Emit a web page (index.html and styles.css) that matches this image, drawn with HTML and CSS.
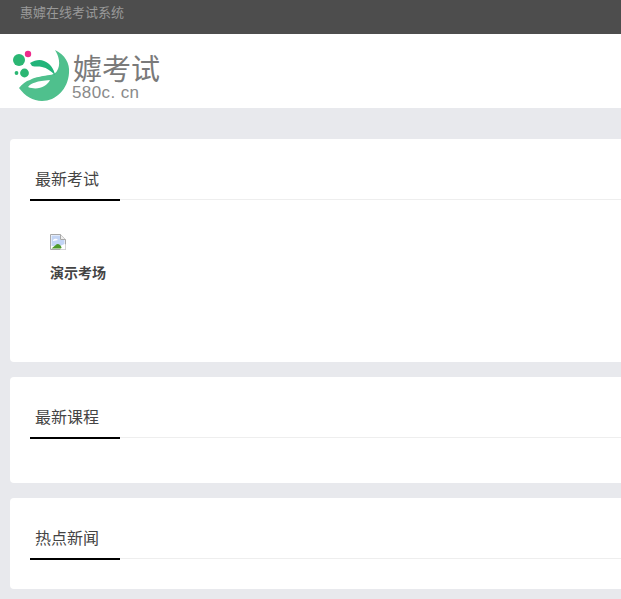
FILE: index.html
```html
<!DOCTYPE html>
<html lang="zh-CN">
<head>
<meta charset="utf-8">
<title>在线考试系统</title>
<link rel="stylesheet" href="styles.css">
</head>
<body>
<header class="topbar"><span class="topbar-text">惠嫭在线考试系统</span></header>
<div class="brand">
  <a class="logo" href="#">
    <svg class="logo-mark" width="60" height="56" viewBox="0 0 60 56" aria-hidden="true">
      <path class="crescent" d="M42 1 C52 6 57 14 56 24 C55 40 43 52 29 52 C20 52 12 47 6 39 C9 35 13 32 17 31 C22 28 26 28 30 27 C36 26 42 26 44 22 C48 16 46 7 42 1 Z"/>
      <path class="slit" d="M15 38 C18 34 24 32 37 31 C34 37 25 42 15 38 Z"/>
      <path class="leaf" d="M17 14 C22 11 27 10 31 12 C37 14 41 20 42 26 C38 22 34 19 29 18 C26 17 22 18 19 17 Z"/>
      <circle class="dot-pink" cx="15" cy="5" r="3.2"/>
      <circle class="dot" cx="6" cy="11" r="6"/>
      <circle class="dot" cx="11.5" cy="24" r="4.4"/>
      <circle class="dot" cx="3.5" cy="24" r="1.9"/>
    </svg>
    <span class="logo-words">
      <span class="logo-name">嫭考试</span>
      <span class="logo-domain">580c. cn</span>
    </span>
  </a>
</div>
<main class="main">
  <section class="card">
    <div class="card-head"><h2 class="card-title">最新考试</h2></div>
    <div class="card-body exams">
      <a class="exam" href="#">
        <svg class="broken" width="16" height="16" viewBox="0 0 16 16" aria-hidden="true">
          <path d="M0.5 0.5H10.5L15.5 5.5V15.5H0.5Z" fill="#fff" stroke="#a9a9a9"/>
          <path d="M10.5 0.5V5.5H15.5" fill="#eee" stroke="#a9a9a9"/>
          <path d="M1.5 1.5H10V6H14.5V10L10 12H1.5Z" fill="#c3d5f5"/>
          <path d="M3 6C5 4 7 5 8 6L3 7Z" fill="#fff"/>
          <path d="M1.5 14.5L7 10C10 10 11 12 12 14.5Z" fill="#4d9a2a"/>
          <path d="M10 15.5L15.5 10V15.5Z" fill="#fff"/>
        </svg>
        <span class="exam-name">演示考场</span>
      </a>
    </div>
  </section>
  <section class="card">
    <div class="card-head"><h2 class="card-title">最新课程</h2></div>
    <div class="card-body courses"></div>
  </section>
  <section class="card">
    <div class="card-head"><h2 class="card-title">热点新闻</h2></div>
  </section>
</main>
</body>
</html>
```
FILE: styles.css
```css
* { box-sizing: border-box; }
html, body { margin: 0; padding: 0; }
body {
  background: #e8e9ed;
  font-family: "Noto Sans CJK SC", "Liberation Sans", sans-serif;
  color: #333;
  overflow-x: hidden;
}
a { color: inherit; text-decoration: none; }
.topbar {
  height: 34px;
  background: #4d4d4d;
  padding-left: 20px;
}
.topbar-text {
  display: block;
  font-size: 13px;
  line-height: 24px;
  color: #999;
}
.brand {
  height: 74px;
  background: #fff;
  display: flex;
  align-items: flex-start;
  padding: 15px 0 0 13px;
}
.logo { display: flex; align-items: flex-start; }
.logo-mark { flex: none; }
.logo-words { display: flex; flex-direction: column; margin-top: 1px; }
.logo-name {
  font-size: 29px;
  line-height: 34px;
  font-weight: 400;
  color: #7a7a7a;
}
.logo-domain {
  font-family: "Liberation Sans", sans-serif;
  font-size: 17px;
  line-height: 18px;
  color: #8a8a8a;
  letter-spacing: 0.4px;
  margin-left: -1px;
}
.main { padding: 31px 0 10px 10px; }
.card {
  background: #fff;
  border-radius: 4px;
  margin-bottom: 15px;
  margin-right: -10px;
  padding-bottom: 30px;
}
.card-head {
  margin-left: 20px;
  border-bottom: 1px solid #eee;
  height: 61px;
}
.card-title {
  width: 90px;
  height: 62px;
  margin: 0;
  padding: 28px 0 0 5px;
  font-size: 16px;
  line-height: 22px;
  font-weight: 400;
  color: #444;
  border-bottom: 2px solid #000;
}
.card-body { padding-left: 40px; }
.exams { height: 132px; padding-top: 34px; }
.courses { height: 15px; }
.exam { display: flex; flex-direction: column; align-items: flex-start; }
.broken { display: block; }
.exam-name {
  margin-top: 12px;
  font-size: 14px;
  line-height: 20px;
  font-weight: 700;
  color: #444;
}
.crescent { fill: #4fc08d; }
.slit { fill: #fff; }
.leaf { fill: #21b47a; }
.dot { fill: #2bb673; }
.dot-pink { fill: #ee2a8b; }
```
